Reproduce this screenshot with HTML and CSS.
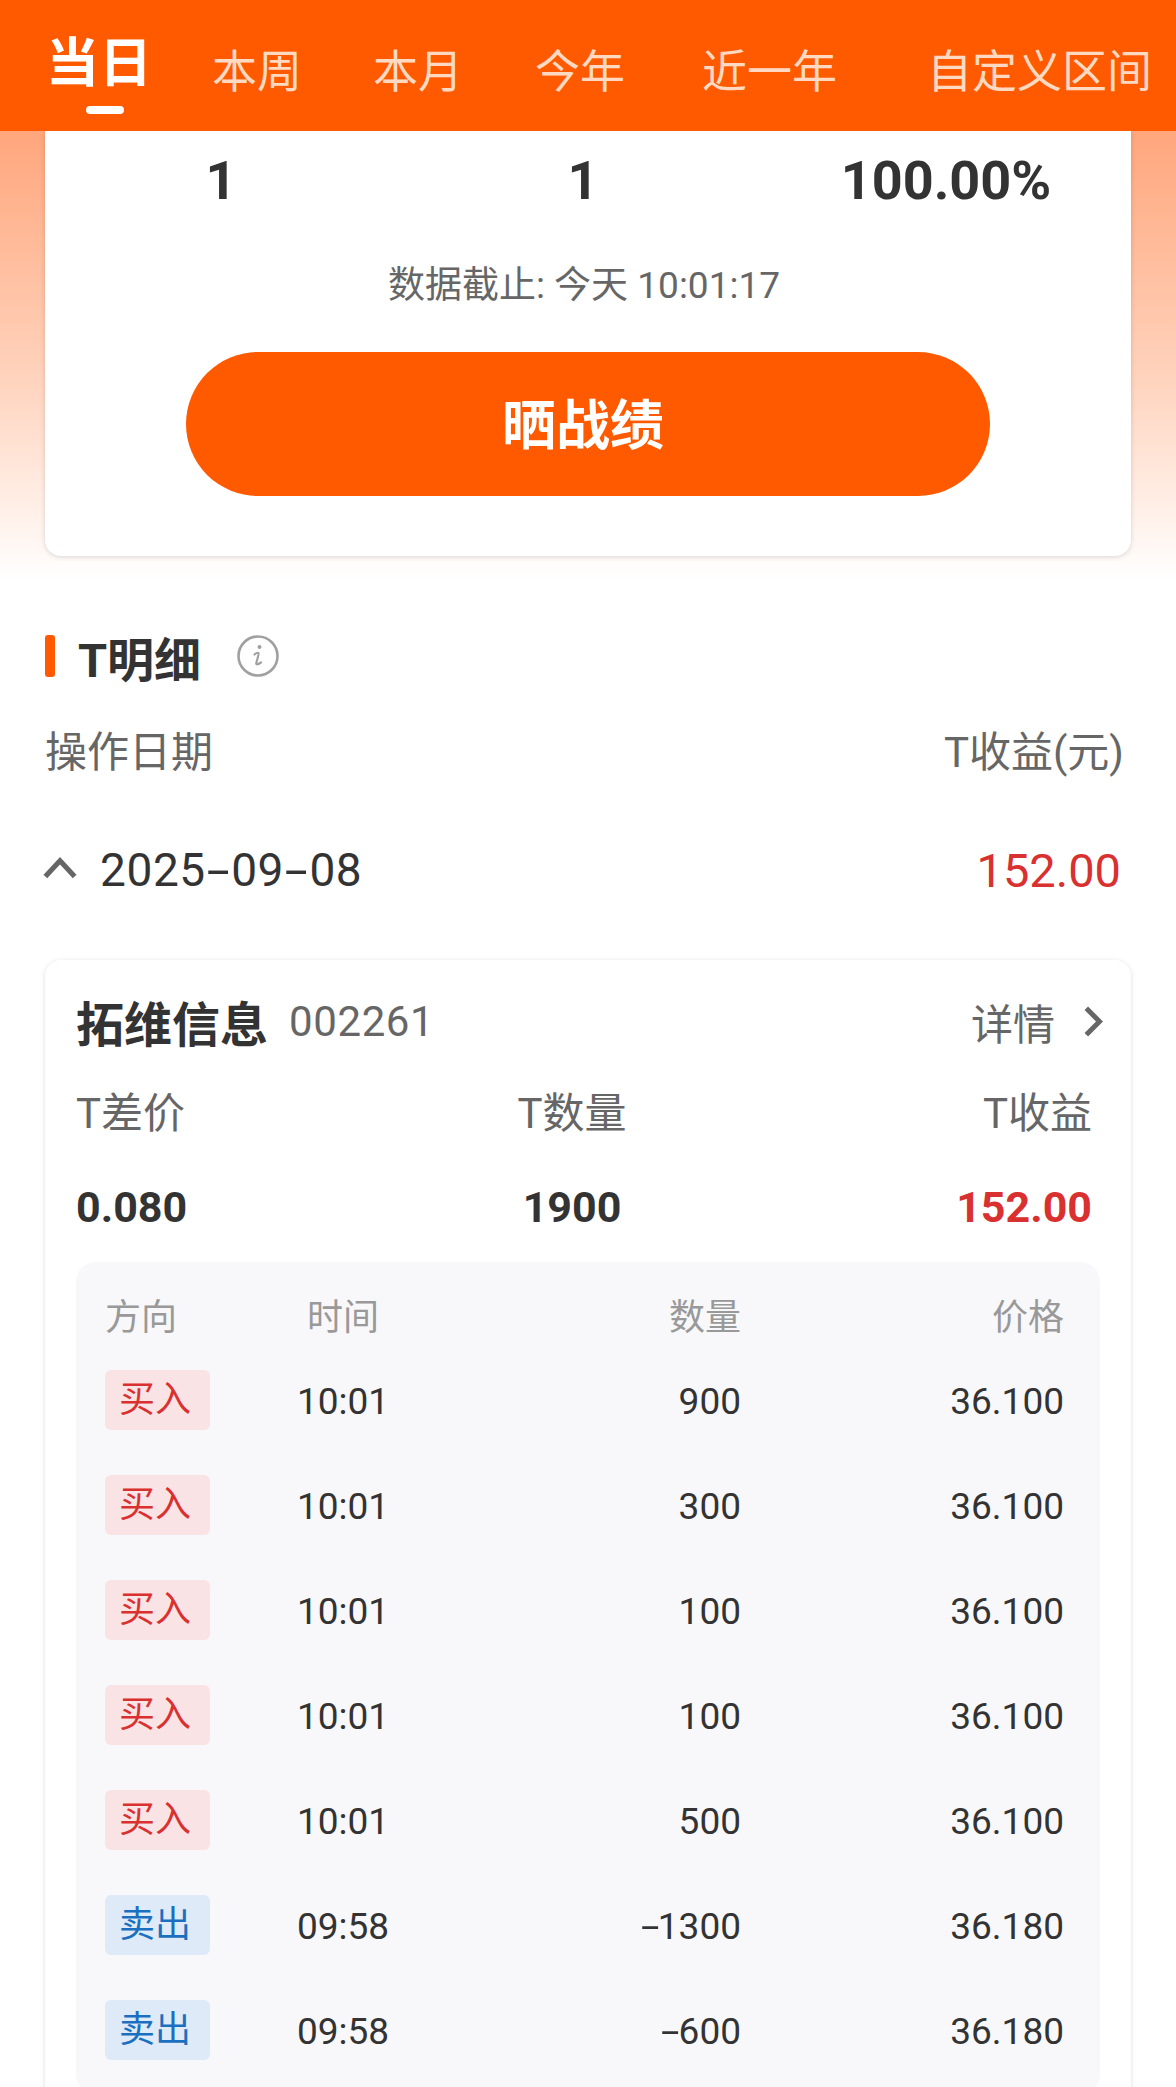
FILE: index.html
```html
<!DOCTYPE html>
<html lang="zh-CN">
<head>
    <meta charset="UTF-8">
    <title>T明细</title>
    <link rel="stylesheet" href="styles.css">
</head>
<body>
    <div class="tabs">
        <span class="tab active">当日</span>
        <span class="tab t2">本周</span>
        <span class="tab t3">本月</span>
        <span class="tab t4">今年</span>
        <span class="tab t5">近一年</span>
        <span class="tab t6">自定义区间</span>
    </div>

    <div class="hero">
        <div class="summary">
            <div class="stats">
                <span>1</span>
                <span>1</span>
                <span>100.00%</span>
            </div>
            <p class="updated">数据截止: 今天 10:01:17</p>
            <div class="share">晒战绩</div>
        </div>
    </div>

    <div class="section-title">
        <i class="bar"></i>
        <h2>T明细</h2>
        <svg class="info" viewBox="0 0 42 42" fill="none">
            <circle cx="21" cy="21" r="19.5" stroke="#a0a0a0" stroke-width="2.6"/>
            <circle cx="22.5" cy="12" r="2" fill="#a0a0a0"/>
            <path d="M17.5 19.5c1.5-1.2 3.4-2 4-1.3.7.8-1.800 7.500-2.200 10-.3 1.800 2.200 1.300 4.700-.8" stroke="#a0a0a0" stroke-width="2.200" stroke-linecap="round"/>
        </svg>
    </div>

    <div class="list-head">
        <span>操作日期</span>
        <span>T收益(元)</span>
    </div>

    <div class="date-row">
        <svg class="chevron-up" viewBox="0 0 32 22" fill="none">
            <path d="M3 19L16 5l13 14" stroke="#666" stroke-width="4.500"/>
        </svg>
        <span class="date">2025<span class="dash">-</span>09<span class="dash">-</span>08</span>
        <span class="profit">152.00</span>
    </div>

    <div class="card">
        <div class="card-head">
            <strong>拓维信息</strong>
            <span class="code">002261</span>
            <span class="detail">详情</span>
            <svg class="chevron-right" viewBox="0 0 20 30" fill="none">
                <path d="M3 3l12 12L3 27" stroke="#666" stroke-width="4.500"/>
            </svg>
        </div>

        <div class="t-row labels">
            <span>T差价</span>
            <span>T数量</span>
            <span>T收益</span>
        </div>
        <div class="t-row values">
            <span>0.080</span>
            <span>1900</span>
            <span class="red">152.00</span>
        </div>

        <div class="trades">
            <div class="trade head">
                <span>方向</span><span>时间</span><span>数量</span><span>价格</span>
            </div>
            <div class="trade">
                <span><b class="tag buy">买入</b></span><span>10:01</span><span>900</span><span>36.100</span>
            </div>
            <div class="trade">
                <span><b class="tag buy">买入</b></span><span>10:01</span><span>300</span><span>36.100</span>
            </div>
            <div class="trade">
                <span><b class="tag buy">买入</b></span><span>10:01</span><span>100</span><span>36.100</span>
            </div>
            <div class="trade">
                <span><b class="tag buy">买入</b></span><span>10:01</span><span>100</span><span>36.100</span>
            </div>
            <div class="trade">
                <span><b class="tag buy">买入</b></span><span>10:01</span><span>500</span><span>36.100</span>
            </div>
            <div class="trade">
                <span><b class="tag sell">卖出</b></span><span>09:58</span><span><span class="dash">-</span>1300</span><span>36.180</span>
            </div>
            <div class="trade">
                <span><b class="tag sell">卖出</b></span><span>09:58</span><span><span class="dash">-</span>600</span><span>36.180</span>
            </div>
        </div>
    </div>
</body>
</html>
```

FILE: styles.css
```css
html, body {
    margin: 0;
    padding: 0;
    height: 2087px;
    overflow: hidden;
}

body {
    font-family: Roboto, "Noto Sans CJK SC", sans-serif;
    background-color: #fff;
    color: #333;
}

.tabs {
    height: 131px;
    background-color: #ff5a00;
    display: flex;
    align-items: center;
    position: relative;
    padding-left: 46px;
    box-sizing: border-box;
}

.tab {
    font-size: 45px;
    line-height: 60px;
    color: #ffd9c2;
    white-space: nowrap;
    padding-top: 14px;
}

.tab.active {
    font-size: 53px;
    font-weight: bold;
    color: #fff;
    padding-top: 0;
    margin-top: -4px;
}

.tab.active::after {
    content: "";
    position: absolute;
    left: 86px;
    top: 106px;
    width: 38px;
    height: 8px;
    border-radius: 4px;
    background: #fff;
}

.t2 { margin-left: 60px; }
.t3 { margin-left: 71px; }
.t4 { margin-left: 72px; }
.t5 { margin-left: 77px; }
.t6 { margin-left: 90px; }

.hero {
    padding: 0 45px;
    height: 449px;
    background: linear-gradient(#ffa67c, #ffd3bd 55%, #fff 100%);
}

.summary {
    height: 425px;
    background: #fff;
    border-radius: 0 0 16px 16px;
    box-shadow: 0 1px 5px rgba(0, 0, 0, 0.15);
    overflow: hidden;
}

.stats {
    display: grid;
    grid-template-columns: 352px 372px 354px;
    text-align: center;
    font-size: 54px;
    font-weight: bold;
    line-height: 60px;
    padding-top: 20px;
}

.updated {
    margin: 51px 8px 0 0;
    text-align: center;
    font-size: 37px;
    line-height: 48px;
    color: #666;
}

.share {
    margin: 42px 0 0 141px;
    width: 804px;
    height: 144px;
    line-height: 150px;
    border-radius: 72px;
    background: #ff5a00;
    color: #fff;
    text-align: center;
    font-size: 54px;
    font-weight: bold;
    box-sizing: border-box;
    padding-right: 10px;
}

.section-title {
    display: flex;
    align-items: center;
    margin: 54px 45px 0;
    height: 44px;
}

.bar {
    width: 10px;
    height: 42px;
    border-radius: 3px;
    background: #ff5a00;
}

.section-title h2 {
    margin: 0 0 0 23px;
    font-size: 47px;
    font-weight: bold;
}

.info {
    width: 42px;
    height: 42px;
    margin-left: 36px;
}

.list-head {
    display: flex;
    justify-content: space-between;
    margin: 50px 52px 0 45px;
    font-size: 42px;
    line-height: 50px;
    color: #666;
}

.date-row {
    display: flex;
    align-items: center;
    margin: 65px 55px 0 42px;
    height: 54px;
}

.chevron-up {
    width: 36px;
    height: 25px;
    margin-top: -6px;
}

.date {
    margin-left: 22px;
    font-size: 46px;
    letter-spacing: 0.6px;
}

.dash {
    display: inline-block;
    transform: scaleX(1.8);
    margin: 0 6px;
}

.trade .dash {
    margin: 0 3px;
}

.profit {
    margin-left: auto;
    font-size: 47px;
    color: #d93030;
}

.card {
    margin: 63px 45px 0;
    height: 1200px;
    background: #fff;
    border-radius: 16px;
    box-shadow: 0 1px 5px rgba(0, 0, 0, 0.14);
    box-sizing: border-box;
    padding: 34px 31px 0;
}

.card-head {
    display: flex;
    align-items: center;
    height: 54px;
}

.card-head strong {
    font-size: 48px;
}

.code {
    margin-left: 21px;
    font-size: 42px;
    color: #666;
    letter-spacing: 0.6px;
}

.detail {
    margin-left: auto;
    font-size: 42px;
    color: #666;
}

.chevron-right {
    width: 22px;
    height: 33px;
    margin: 0 -5px 0 28px;
}

.t-row {
    display: grid;
    grid-template-columns: 440px 112px 1fr;
    margin-right: 8px;
    white-space: nowrap;
}

.t-row span:nth-child(2) {
    text-align: center;
    display: flex;
    justify-content: center;
}

.t-row span:nth-child(3) {
    text-align: right;
}

.labels {
    margin-top: 41px;
    font-size: 42px;
    line-height: 50px;
    color: #666;
}

.values {
    margin-top: 42px;
    font-size: 43px;
    line-height: 52px;
    font-weight: bold;
}

.red {
    color: #d93030;
}

.trades {
    margin-top: 29px;
    height: 833px;
    box-sizing: border-box;
    background: #f8f8fb;
    border-radius: 20px;
    padding: 0 28px 0 29px;
}

.trade {
    display: grid;
    grid-template-columns: 138px 200px 298px 323px;
    align-items: center;
    height: 105px;
    font-size: 37px;
    color: #333;
}

.trade > span {
    padding-top: 3px;
}

.trade > span:first-child {
    padding-top: 0;
}

.trade span:nth-child(2) {
    text-align: center;
}

.trade span:nth-child(3),
.trade span:nth-child(4) {
    text-align: right;
}

.trade.head {
    height: 104px;
    font-size: 36px;
    color: #999;
}

.trade.head > span {
    padding-top: 0;
}

.trade.head + .trade {
    margin-top: -19px;
}

.tag {
    display: block;
    width: 105px;
    height: 60px;
    line-height: 60px;
    border-radius: 6px;
    box-sizing: border-box;
    padding-left: 14px;
    font-size: 36px;
    font-weight: normal;
}

.buy {
    background: #f9e3e4;
    color: #d93030;
}

.sell {
    background: #deeaf7;
    color: #1a6fc0;
}
```
